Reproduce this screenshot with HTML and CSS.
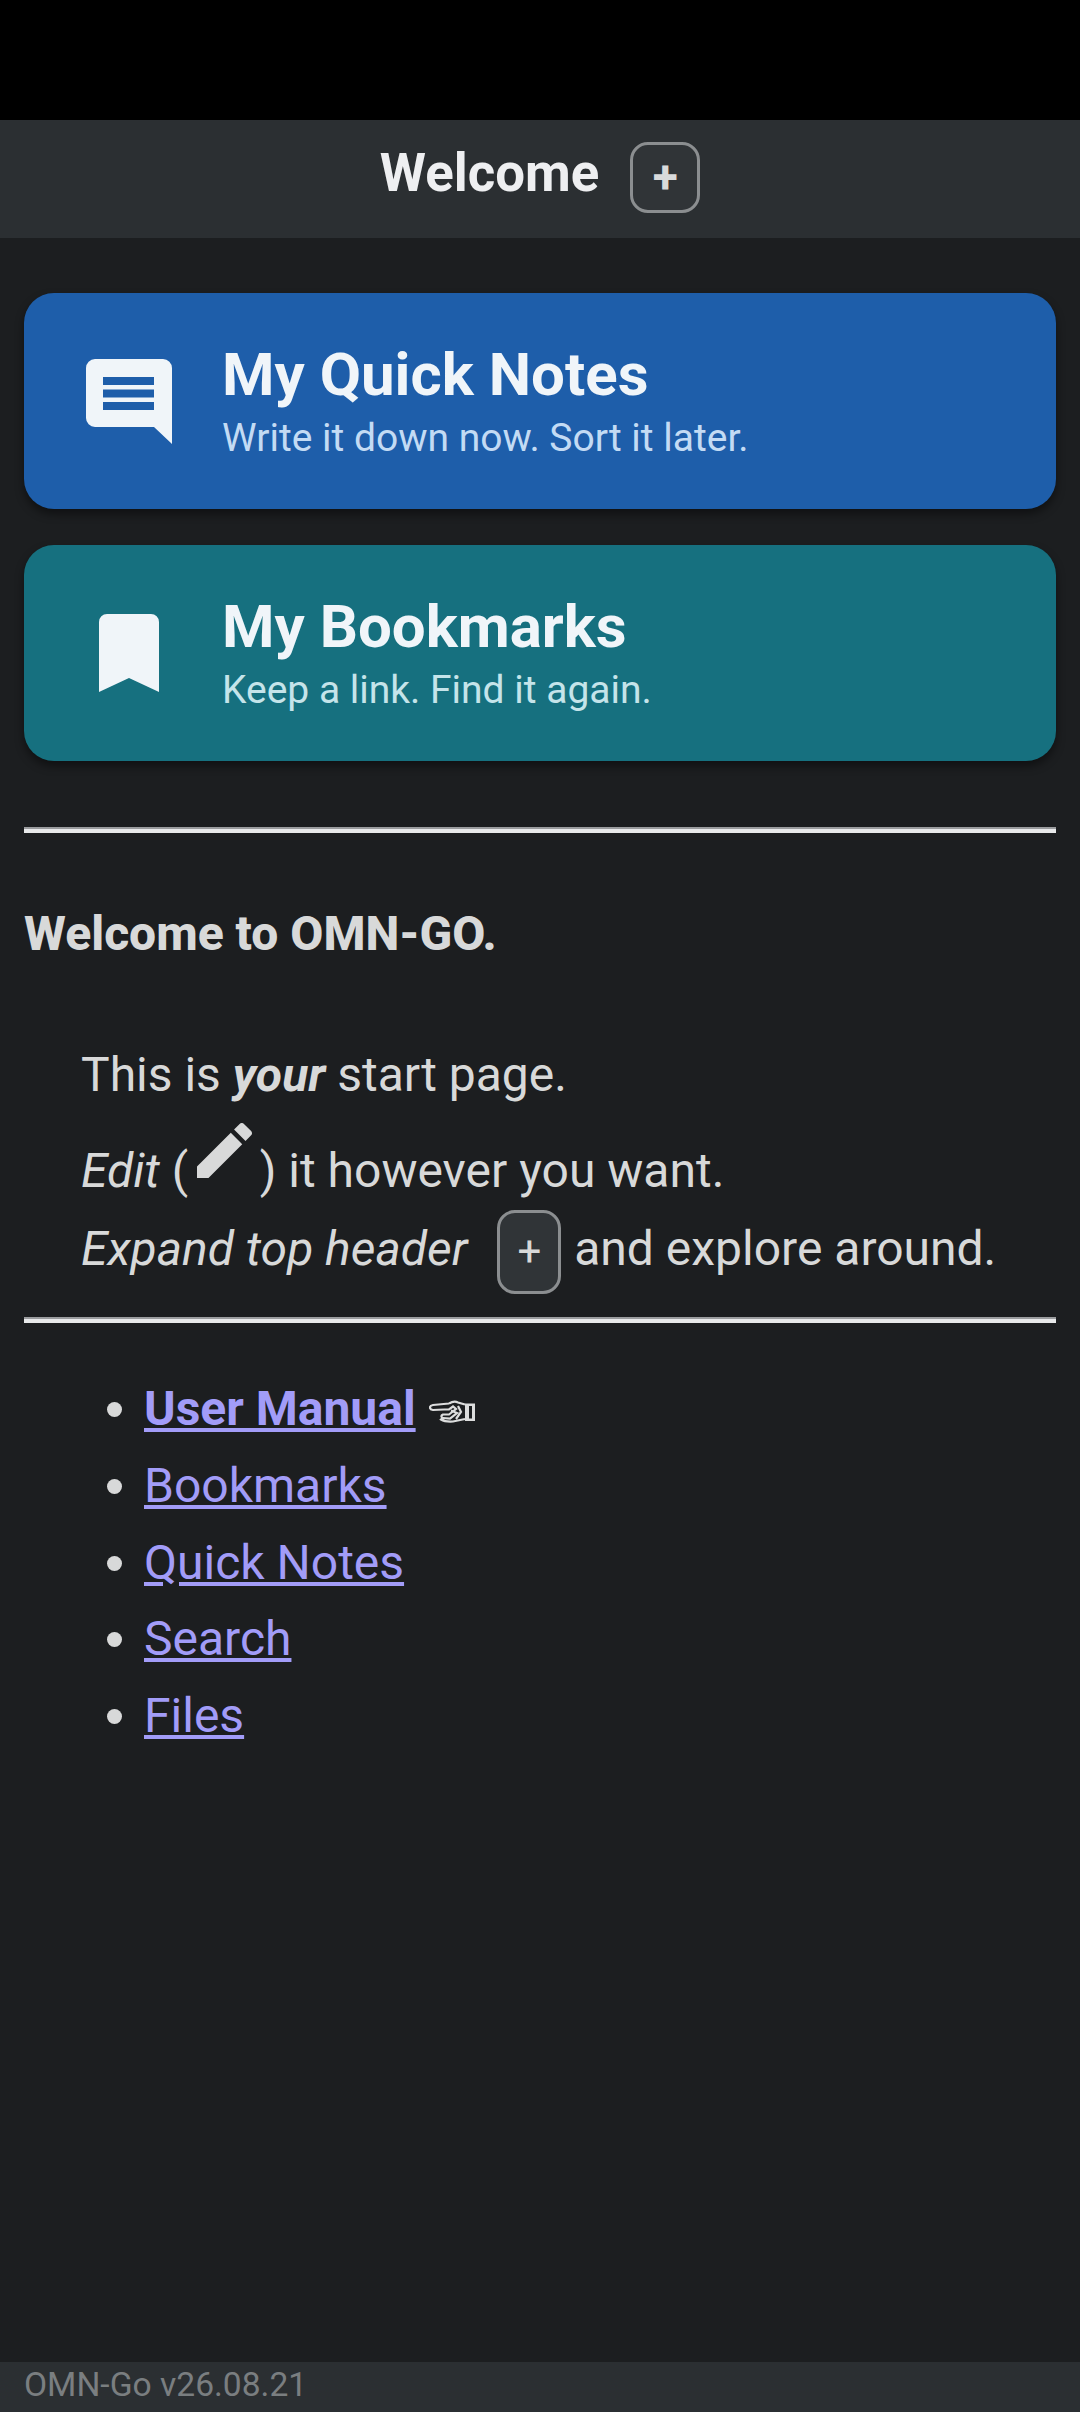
FILE: index.html
```html
<!DOCTYPE html>
<html lang="en">
<head>
<meta charset="utf-8">
<title>Welcome</title>
<link rel="stylesheet" href="styles.css">
</head>
<body>
<div class="status"></div>
<header class="top">
  <h1 class="top-title">Welcome</h1>
  <button class="expand">+</button>
</header>
<main class="main">
  <a class="card card-blue">
    <span class="card-icon">
      <svg class="ico-chat" viewBox="0 0 86 85"><path fill-rule="evenodd" d="M9 0h68a9 9 0 0 1 9 9v76L68 68H9a9 9 0 0 1-9-9V9a9 9 0 0 1 9-9zM17 18v8h51v-8zM17 30.500v8h51v-8zM17 43v8h51v-8z"/></svg>
    </span>
    <span class="card-text">
      <span class="card-title">My Quick Notes</span>
      <span class="card-sub card-sub-blue">Write it down now. Sort it later.</span>
    </span>
  </a>
  <a class="card card-teal">
    <span class="card-icon">
      <svg class="ico-mark" viewBox="0 0 60 78"><path d="M8 0h44a8 8 0 0 1 8 8v70L30 64 0 78V8a8 8 0 0 1 8-8z"/></svg>
    </span>
    <span class="card-text">
      <span class="card-title">My Bookmarks</span>
      <span class="card-sub card-sub-teal">Keep a link. Find it again.</span>
    </span>
  </a>
  <hr class="rule rule-first">
  <h2 class="intro">Welcome to OMN-GO.</h2>
  <div class="quote">
    <p class="line line-a">This is <b><i>your</i></b> start page.</p>
    <p class="line line-b"><i>Edit</i> (<svg class="ico-pen" viewBox="3 3 18 18"><path d="M3 17.250V21h3.750L17.810 9.940l-3.750-3.750L3 17.250zM20.710 7.040c.39-.39.39-1.020 0-1.410l-2.340-2.340c-.39-.39-1.020-.39-1.410 0l-1.830 1.830 3.750 3.750 1.830-1.830z"/></svg>) it however you want.</p>
    <p class="line line-c"><i>Expand top header</i> <span class="inline-plus">+</span> and explore around.</p>
  </div>
  <hr class="rule rule-second">
  <ul class="links">
    <li><a class="link"><b>User Manual</b></a> <svg class="ico-hand" viewBox="0 0 46 23"><path class="hand-line" d="M20 3.500L4 5Q1 5.500 1 7.500T4 10L15 9.500M20 3.500Q25 0.500 29 2.500L36 4.500M15 9.500H20L24 6.500L27 9L20 14.500H14Q11 16 13.500 18L12 19.500Q16 22 24 21.500L36 19M22 10.500L28 13L21 18.500L14 18M29 6L32 12L27 19"/><path class="hand-cuff" fill-rule="evenodd" d="M36 3.500H46V21H36zM40 6V18.500H43V6z"/></svg></li>
    <li><a class="link">Bookmarks</a></li>
    <li><a class="link">Quick Notes</a></li>
    <li><a class="link">Search</a></li>
    <li><a class="link">Files</a></li>
  </ul>
</main>
<footer class="foot">OMN-Go v26.08.21</footer>
</body>
</html>
```
FILE: styles.css
```css
* { box-sizing: border-box; }
html, body { margin: 0; height: 100%; }
body {
  display: flex;
  flex-direction: column;
  height: 2412px;
  background: #1c1e20;
  color: #d8d9d9;
  font-family: Roboto, "Liberation Sans", sans-serif;
  font-size: 48px;
}
.status { height: 120px; background: #000; flex: none; }
.top {
  flex: none;
  height: 118px;
  background: #2b2f32;
  display: flex;
  align-items: center;
  justify-content: center;
  gap: 31px;
}
.top-title { margin: 0 0 12px; font-size: 52.800px; font-weight: 700; color: #eeeff1; line-height: 60px; }
.expand {
  width: 70px;
  height: 71px;
  padding: 0;
  border: 3px solid #8b8e90;
  border-radius: 18px;
  background: #303437;
  color: #d8dadb;
  font: 700 46px/1 Roboto, sans-serif;
  margin-top: -4px;
}
.main { flex: 1; padding: 55px 24px 0; }
.card {
  display: flex;
  align-items: center;
  height: 216px;
  padding-left: 60px;
  border-radius: 30px;
  box-shadow: 0 5px 10px rgba(0,0,0,.45);
  color: #f0f5f9;
}
.card + .card { margin-top: 36px; }
.card-blue { background: #1e5eaa; }
.card-teal { background: #16707f; }
.card-icon { flex: none; width: 90px; display: flex; justify-content: center; margin-right: 48px; }
.card-icon svg { display: block; fill: #f0f5f9; }
.ico-chat { width: 86px; height: 85px; }
.ico-mark { width: 60px; height: 78px; }
.card-text { display: flex; flex-direction: column; padding-top: 5px; }
.card-title { font-size: 60px; font-weight: 700; line-height: 66px; }
.card-sub { font-size: 39px; line-height: 54px; margin-top: 3px; }
.card-sub-blue { color: #c3dbf4; }
.card-sub-teal { color: #c5e4ea; }
.rule { margin: 0; height: 6px; border: 0; border-top: 2px solid #9a9c9e; background: #e8e9ea; }
.rule-first { margin-top: 66px; }
.rule-second { margin-top: 23px; }
.intro { margin: 68px 0 0; font-size: 48px; font-weight: 800; line-height: 66px; color: #d8d9d9; }
.quote { margin: 75px 0 0; padding-left: 57px; }
.line { margin: 0; line-height: 66px; white-space: nowrap; }
.line-b { margin-top: 29.500px; }
.line-c { margin-top: 6px; }
.ico-pen { width: 55px; height: 55px; fill: #d8d9d9; vertical-align: 9px; margin: -20px 7.500px 0 9px; }
.inline-plus {
  display: inline-flex;
  align-items: center;
  justify-content: center;
  width: 64px;
  height: 84px;
  margin: 0 1px 0 18px;
  border: 3px solid #8b8e90;
  border-radius: 18px;
  background: #303437;
  font-size: 42px;
  vertical-align: middle;
}
.links { margin: 48.500px 0 0; padding-left: 120px; list-style: disc; }
.links li { line-height: 76.800px; }
.link { color: #a29cf8; text-decoration: underline; }
.ico-hand { width: 46px; height: 23px; margin-left: 1px; vertical-align: 2px; }
.hand-line { fill: none; stroke: #dcdddd; stroke-width: 2.200; }
.hand-cuff { fill: #dcdddd; }
.foot {
  flex: none;
  height: 50px;
  background: #2b2f32;
  padding-left: 24px;
  font-size: 33.600px;
  line-height: 46px;
  color: #7a7e80;
}
```
